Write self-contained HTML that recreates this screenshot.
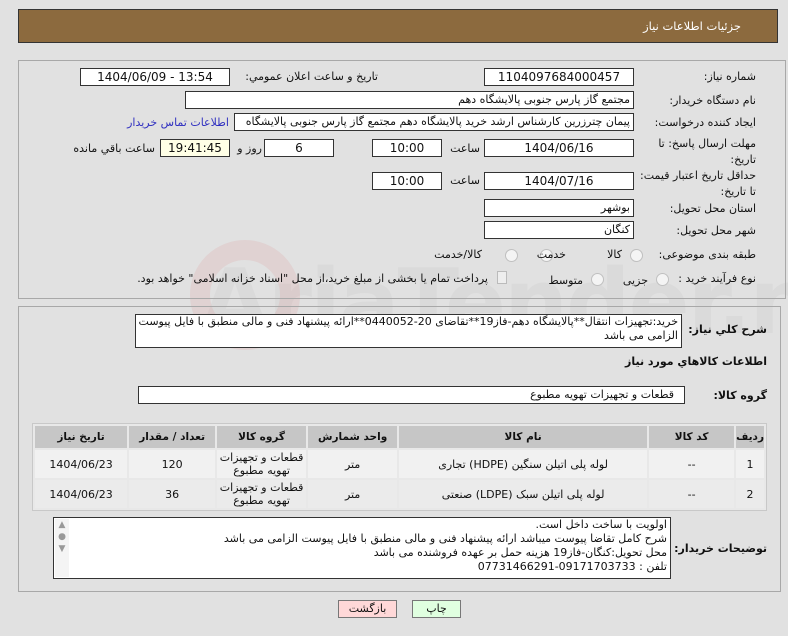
<!DOCTYPE html>
<html><head><meta charset="utf-8"><style>
*{box-sizing:border-box;margin:0;padding:0}
body{width:788px;height:636px;background:#e1e1e1;font-family:"DejaVu Sans","Liberation Sans",sans-serif;font-size:11px;color:#111;position:relative;overflow:hidden}
.a{position:absolute;white-space:nowrap}
.box{position:absolute;border:1px solid #a8a8a8;}
.in{position:absolute;background:#fff;border:1px solid #333;height:18px;line-height:16px;text-align:center;font-size:12px;white-space:nowrap;overflow:hidden}
.r{text-align:right;padding-right:3px;direction:rtl;font-size:11px}
.lbl{position:absolute;direction:rtl;text-align:right;white-space:nowrap}
.rad{position:absolute;width:13px;height:13px;border-radius:50%;border:1px solid #c0c0c0;background:#f4f4f4}
table{position:absolute;left:32px;top:423px;width:735px;border-collapse:separate;border-spacing:2px;background:#e8e8e8;border:1px solid #c8c8c8;direction:rtl}
td,th{text-align:center;font-size:11px}
th{background:#c6c6c6;height:22px;font-weight:bold;font-size:10.5px}
td{height:28px;background:#f1f1f1;line-height:13px}
tr.b td{background:#ebebeb}
.bl{font-weight:bold;font-size:11px}
</style></head><body>
<div class="a" style="left:18px;top:9px;width:760px;height:34px;background:#8c6a3e;border:1px solid #333"></div>
<div class="lbl" style="right:47px;top:19px;color:#fff;font-size:11.5px">جزئیات اطلاعات نیاز</div>
<div class="a" style="left:200px;top:250px;font-size:90px;font-weight:bold;color:rgba(190,190,190,.18);letter-spacing:-2px">AriaTender.neT</div>
<div class="a" style="left:190px;top:240px;width:110px;height:110px;border:20px solid rgba(220,150,150,.2);border-radius:50%;"></div>

<div class="box" style="left:18px;top:60px;width:768px;height:239px"></div>
<div class="lbl" style="right:32px;top:70px">شماره نیاز:</div>
<div class="in" style="left:484px;top:68px;width:150px">1104097684000457</div>
<div class="lbl" style="right:410px;top:70px">تاریخ و ساعت اعلان عمومي:</div>
<div class="in" style="left:80px;top:68px;width:150px">1404/06/09 - 13:54</div>
<div class="lbl" style="right:32px;top:94px">نام دستگاه خریدار:</div>
<div class="in r" style="left:185px;top:91px;width:449px">مجتمع گاز پارس جنوبی  پالایشگاه دهم</div>
<div class="lbl" style="right:32px;top:116px">ایجاد کننده درخواست:</div>
<div class="in r" style="left:234px;top:113px;width:400px">پیمان چترزرین کارشناس ارشد خرید پالایشگاه دهم مجتمع گاز پارس جنوبی  پالایشگاه</div>
<div class="lbl" style="right:559px;top:116px;color:#3030c0">اطلاعات تماس خریدار</div>
<div class="lbl" style="right:32px;top:136px;line-height:16px">مهلت ارسال پاسخ: تا<br>تاریخ:</div>
<div class="in" style="left:484px;top:139px;width:150px">1404/06/16</div>
<div class="lbl" style="right:308px;top:142px">ساعت</div>
<div class="in" style="left:372px;top:139px;width:70px">10:00</div>
<div class="in" style="left:264px;top:139px;width:70px">6</div>
<div class="lbl" style="right:526px;top:142px">روز و</div>
<div class="in" style="left:160px;top:139px;width:70px;background:#ffffe6">19:41:45</div>
<div class="lbl" style="right:633px;top:142px">ساعت باقي مانده</div>
<div class="lbl" style="right:32px;top:168px;line-height:16px">حداقل تاریخ اعتبار قیمت:<br>تا تاریخ:</div>
<div class="in" style="left:484px;top:172px;width:150px">1404/07/16</div>
<div class="lbl" style="right:308px;top:174px">ساعت</div>
<div class="in" style="left:372px;top:172px;width:70px">10:00</div>
<div class="lbl" style="right:32px;top:202px">استان محل تحویل:</div>
<div class="in r" style="left:484px;top:199px;width:150px">بوشهر</div>
<div class="lbl" style="right:32px;top:224px">شهر محل تحویل:</div>
<div class="in r" style="left:484px;top:221px;width:150px">کنگان</div>
<div class="lbl" style="right:32px;top:248px">طبقه بندی موضوعی:</div>
<div class="rad" style="left:630px;top:249px"></div><div class="lbl" style="right:166px;top:248px">کالا</div>
<div class="rad" style="left:540px;top:249px"></div><div class="lbl" style="right:222px;top:248px">خدمت</div>
<div class="rad" style="left:505px;top:249px"></div><div class="lbl" style="right:306px;top:248px">کالا/خدمت</div>
<div class="lbl" style="right:32px;top:272px">نوع فرآیند خرید :</div>
<div class="rad" style="left:656px;top:273px"></div><div class="lbl" style="right:140px;top:274px">جزیی</div>
<div class="rad" style="left:591px;top:273px"></div><div class="lbl" style="right:205px;top:274px">متوسط</div>
<div class="a" style="left:497px;top:271px;width:10px;height:13px;border:1px solid #bbb;background:#eee"></div>
<div class="lbl" style="right:300px;top:272px">پرداخت تمام یا بخشی از مبلغ خرید،از محل "اسناد خزانه اسلامی" خواهد بود.</div>

<div class="box" style="left:18px;top:306px;width:763px;height:286px"></div>
<div class="lbl bl" style="right:21px;top:323px">شرح کلي نیاز:</div>
<div class="in r" style="left:135px;top:314px;width:547px;height:34px;line-height:14px;white-space:normal;text-align:right">خرید:تجهیزات انتقال**پالایشگاه دهم-فاز19**تقاضای 20-0440052**ارائه پیشنهاد فنی و مالی منطبق با فایل پیوست الزامی می باشد</div>
<div class="lbl bl" style="right:21px;top:355px">اطلاعات کالاهاي مورد نیاز</div>
<div class="lbl bl" style="right:21px;top:389px">گروه کالا:</div>
<div class="in r" style="left:138px;top:386px;width:547px;padding-right:10px">قطعات و تجهیزات تهویه مطبوع</div>
<table>
<tr><th style="width:27px">ردیف</th><th style="width:85px">کد کالا</th><th style="width:248px">نام کالا</th><th style="width:89px">واحد شمارش</th><th style="width:89px">گروه کالا</th><th style="width:86px">تعداد / مقدار</th><th>تاریخ نیاز</th></tr>
<tr><td>1</td><td>--</td><td>لوله پلی اتیلن سنگین (HDPE) تجاری</td><td>متر</td><td>قطعات و تجهیزات<br>تهویه مطبوع</td><td>120</td><td>1404/06/23</td></tr>
<tr class="b"><td>2</td><td>--</td><td>لوله پلی اتیلن سبک (LDPE) صنعتی</td><td>متر</td><td>قطعات و تجهیزات<br>تهویه مطبوع</td><td>36</td><td>1404/06/23</td></tr>
</table>
<div class="lbl bl" style="right:21px;top:542px">توضیحات خریدار:</div>
<div class="in r" style="left:53px;top:517px;width:618px;height:62px;line-height:14px;text-align:right;white-space:nowrap">اولویت با ساخت داخل است.<br>شرح کامل تقاضا پیوست میباشد ارائه پیشنهاد فنی و مالی منطبق با فایل پیوست الزامی می باشد<br>محل تحویل:کنگان-فاز19 هزینه حمل بر عهده فروشنده می باشد<br>تلفن : 09171703733-07731466291</div>
<div class="a" style="left:55px;top:519px;width:14px;height:58px;background:#f4f4f4;color:#999;font-size:9px;text-align:center;line-height:12px">▲<br>●<br>▼</div>

<div class="a" style="left:338px;top:600px;width:59px;height:18px;background:#ffd8d8;border:1px solid #777;text-align:center;line-height:16px">بازگشت</div>
<div class="a" style="left:412px;top:600px;width:49px;height:18px;background:#e0ffe0;border:1px solid #777;text-align:center;line-height:16px">چاپ</div>
</body></html>
